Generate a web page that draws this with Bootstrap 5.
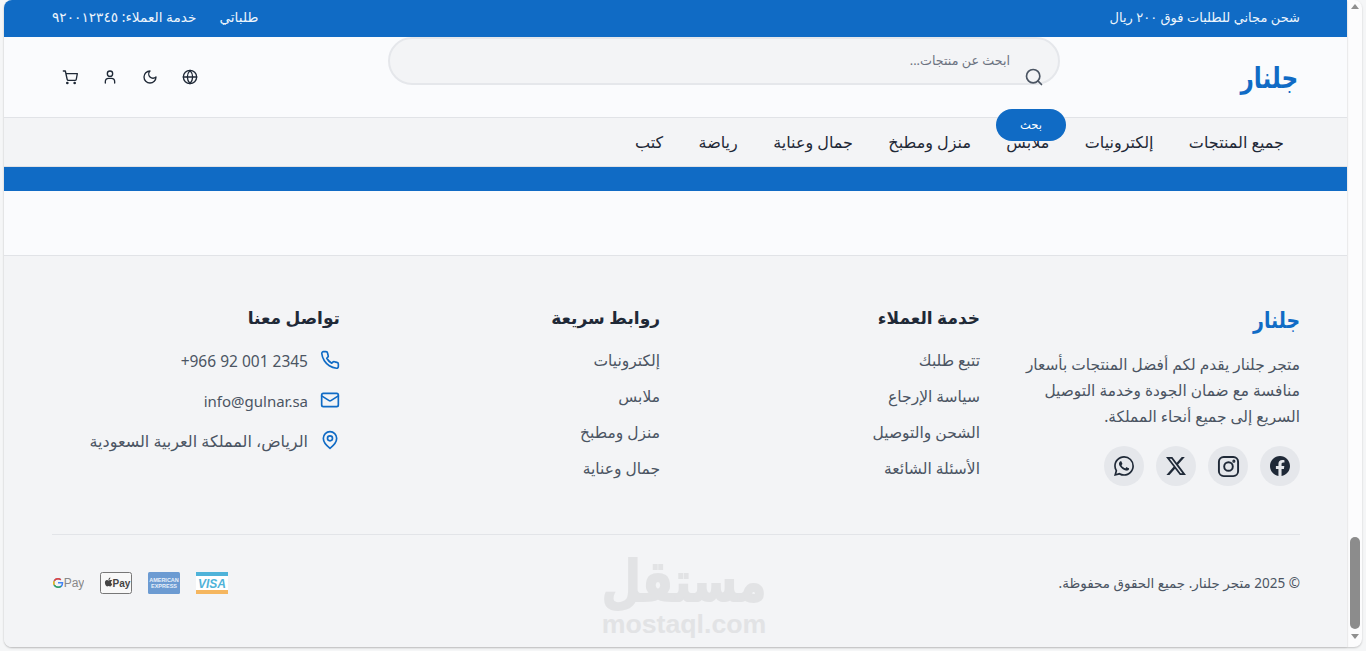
<!DOCTYPE html>
<html lang="ar" dir="rtl">
<head>
<meta charset="utf-8">
<title>جلنار</title>
<link href="https://cdn.jsdelivr.net/npm/bootstrap@5.3.0/dist/css/bootstrap.min.css" rel="stylesheet">
<style>
html,body{height:651px;overflow:hidden;background:#f5f6f7;}
body{font-family:"Noto Sans","DejaVu Sans",sans-serif;color:#1f2937;}
.shell{height:651px;direction:ltr;}
.gutter-l{width:4px;}
.pagebox{width:1343px;height:647px;direction:rtl;border-radius:8px 0 0 8px;overflow:hidden;position:relative;background:#fafbfd;box-shadow:0 1px 2px rgba(0,0,0,.25);}
.sbar{width:15px;height:647px;background:#fcfcfd;border-radius:0 8px 8px 0;box-shadow:0 1px 2px rgba(0,0,0,.2);}
.sbar-up{width:0;height:0;border:4px solid transparent;border-top:0;border-bottom:5px solid #8f8f8f;}
.sbar-dn{width:0;height:0;border:4px solid transparent;border-bottom:0;border-top:5px solid #8f8f8f;}
.sbar-thumb{width:10px;height:92px;background:#8c8c8c;border-radius:5px;margin-top:528px;margin-bottom:5px;}
.wrap{padding:0 47px 0 48px;}
.topstrip{height:37px;background:#106bc5;color:#eef5fc;font-size:13px;padding-bottom:2px;}
.top-left{gap:23px;font-size:13.7px;}
.headstrip{height:81px;border-bottom:1px solid #e1e3e7;}
.logo-big{font-size:29px;font-weight:700;color:#106bc5;line-height:1;padding-bottom:2px;transform:scaleX(.8);transform-origin:right center;margin-right:2px;}
.head-icons{margin-left:-2px;}
.searchbox{position:absolute;top:37px;left:384px;width:672px;height:48px;border:2px solid #e5e7eb;border-radius:24px;background:#f3f4f6;font-size:12.7px;color:#6b7280;padding:12px 48px 0 0;}
.search-ico{position:absolute;right:14px;top:28px;}
.search-btn{position:absolute;top:109px;left:992px;width:70px;height:32px;border:0;border-radius:16px;background:#106bc5;color:#fff;font-size:11.5px;z-index:3;}
.ico-btn{width:40px;height:40px;}
.navstrip{height:49px;background:#f3f4f6;border-bottom:1px solid #dfe1e5;font-size:16px;gap:35.4px;padding-right:63px;}
.navstrip a{color:#1f2937;text-decoration:none;}
.bluestrip{height:24px;background:#106bc5;}
.blankstrip{height:65px;border-bottom:1px solid #e1e3e7;}
.footbox{height:391px;background:#f3f4f6;padding-top:48px;}
.footgrid{display:grid;grid-template-columns:repeat(4,288px);gap:32px;height:230px;}
.foot-logo{font-size:23px;font-weight:700;color:#106bc5;line-height:30px;margin-bottom:18px;transform:scaleX(.82);transform-origin:right center;}
.foot-about{font-size:15.4px;line-height:26px;color:#4b5563;margin-bottom:16px;}
.social-row{gap:12px;}
.social{width:40px;height:40px;border-radius:50%;background:#e5e7eb;}
.foot-h{font-size:17px;font-weight:700;line-height:28px;color:#1f2937;margin-bottom:16px;}
.foot-links{font-size:15.5px;color:#4b5563;padding-top:1px!important;}
.foot-links li{height:36px;line-height:22px;}
.contact-list{padding-top:2px;}
.contact-row{height:40px;gap:12px;font-size:15.5px;color:#4b5563;}
.contact-row span{line-height:23px;}
.mail-text{font-size:15px;}
.place-text{font-size:16px;}
.copyrow{border-top:1px solid #e2e4e8;height:97px;font-size:13.5px;color:#4b5563;}
.pay{gap:16px;}
.wmark{position:absolute;left:592px;top:557px;width:176px;text-align:center;color:#e2e3e5;font-weight:700;}
.wmark-ar{font-size:45px;line-height:46px;height:46px;-webkit-text-stroke:1.5px #e2e3e5;transform:scaleY(1.25);}
.wmark-en{font-size:26.7px;line-height:26px;margin-top:8px;font-family:"Liberation Sans",sans-serif;direction:ltr;}
</style>
</head>
<body class="m-0">
<div class="shell d-flex align-items-start">
  <div class="gutter-l align-self-stretch"></div>
  <div class="pagebox">
    <div class="topstrip wrap d-flex justify-content-between align-items-center">
      <span>شحن مجاني للطلبات فوق ٢٠٠ ريال</span>
      <div class="top-left d-flex"><span>طلباتي</span><span>خدمة العملاء: ٩٢٠٠١٢٣٤٥</span></div>
    </div>
    <div class="headstrip wrap d-flex justify-content-between align-items-center">
      <div class="logo-big">جلنار</div>
      <div class="head-icons d-flex">
        <div class="ico-btn d-flex align-items-center justify-content-center"><svg width="16" height="16" viewBox="0 0 24 24" fill="none" stroke="#1f2937" stroke-width="2" stroke-linecap="round" stroke-linejoin="round"><circle cx="12" cy="12" r="10"/><path d="M2 12h20"/><path d="M12 2a15.3 15.3 0 0 1 4 10 15.3 15.3 0 0 1-4 10 15.3 15.3 0 0 1-4-10 15.3 15.3 0 0 1 4-10z"/></svg></div>
        <div class="ico-btn d-flex align-items-center justify-content-center"><svg width="16" height="16" viewBox="0 0 24 24" fill="none" stroke="#1f2937" stroke-width="2" stroke-linecap="round" stroke-linejoin="round"><path d="M12 3a6 6 0 0 0 9 9 9 9 0 1 1-9-9z"/></svg></div>
        <div class="ico-btn d-flex align-items-center justify-content-center"><svg width="16" height="16" viewBox="0 0 24 24" fill="none" stroke="#1f2937" stroke-width="2" stroke-linecap="round" stroke-linejoin="round"><circle cx="12" cy="7" r="4"/><path d="M5 21v-2a5 5 0 0 1 5-5h4a5 5 0 0 1 5 5v2"/></svg></div>
        <div class="ico-btn d-flex align-items-center justify-content-center"><svg width="16" height="16" viewBox="0 0 24 24" fill="none" stroke="#1f2937" stroke-width="2" stroke-linecap="round" stroke-linejoin="round"><circle cx="8" cy="21" r="1"/><circle cx="19" cy="21" r="1"/><path d="M2 3h3l2.7 12.4a2 2 0 0 0 2 1.600h9.700a2 2 0 0 0 2-1.600L23 7H6"/></svg></div>
      </div>
    </div>
    <div class="searchbox">ابحث عن منتجات...
      <svg class="search-ico" width="20" height="20" viewBox="0 0 24 24" fill="none" stroke="#4b5563" stroke-width="2" stroke-linecap="round"><circle cx="11" cy="11" r="8"/><path d="m21 21-4.3-4.3"/></svg>
    </div>
    <button class="search-btn" type="button">بحث</button>
    <nav class="navstrip d-flex align-items-center">
      <a href="#">جميع المنتجات</a><a href="#">إلكترونيات</a><a href="#">ملابس</a><a href="#">منزل ومطبخ</a><a href="#">جمال وعناية</a><a href="#">رياضة</a><a href="#">كتب</a>
    </nav>
    <div class="bluestrip"></div>
    <div class="blankstrip"></div>
    <footer class="footbox wrap">
      <div class="footgrid">
        <div>
          <div class="foot-logo">جلنار</div>
          <p class="foot-about">متجر جلنار يقدم لكم أفضل المنتجات بأسعار منافسة مع ضمان الجودة وخدمة التوصيل السريع إلى جميع أنحاء المملكة.</p>
          <div class="social-row d-flex">
            <div class="social d-flex align-items-center justify-content-center"><svg width="20" height="20" viewBox="0 0 24 24" fill="#1f2937"><path d="M24 12.07C24 5.4 18.63 0 12 0S0 5.4 0 12.07C0 18.1 4.39 23.1 10.13 24v-8.44H7.08v-3.49h3.05V9.41c0-3.02 1.79-4.69 4.53-4.69 1.31 0 2.68.24 2.68.24v2.97h-1.51c-1.49 0-1.96.93-1.96 1.89v2.25h3.33l-.53 3.49h-2.8V24C19.61 23.1 24 18.1 24 12.07z"/></svg></div>
            <div class="social d-flex align-items-center justify-content-center"><svg width="23" height="23" viewBox="0 0 24 24" fill="none" stroke="#1f2937" stroke-width="2"><rect x="2" y="2" width="20" height="20" rx="5"/><circle cx="12" cy="12" r="4.5"/><circle cx="17.6" cy="6.4" r=".6" fill="#1f2937"/></svg></div>
            <div class="social d-flex align-items-center justify-content-center"><svg width="20" height="20" viewBox="0 0 24 24" fill="#1f2937"><path d="M18.9 1.15h3.68l-8.04 9.19L24 22.85h-7.41l-5.8-7.58-6.64 7.58H.47l8.6-9.83L0 1.15h7.59l5.24 6.93zM17.61 20.64h2.04L6.49 3.24H4.3z"/></svg></div>
            <div class="social d-flex align-items-center justify-content-center"><svg width="20" height="20" viewBox="0 0 24 24" fill="#1f2937"><path d="M17.47 14.38c-.3-.15-1.76-.87-2.03-.97-.27-.1-.47-.15-.67.15-.2.3-.77.97-.94 1.16-.17.2-.35.22-.65.08-.3-.15-1.26-.46-2.4-1.48-.89-.79-1.49-1.77-1.66-2.07-.17-.3-.02-.46.13-.61.13-.13.3-.35.45-.52.15-.17.2-.3.3-.5.1-.2.05-.37-.03-.52-.07-.15-.67-1.61-.92-2.2-.24-.58-.49-.5-.67-.51h-.57c-.2 0-.52.07-.79.37-.27.3-1.04 1.02-1.04 2.48s1.07 2.88 1.21 3.07c.15.2 2.1 3.2 5.08 4.49.71.3 1.26.49 1.7.62.71.23 1.36.2 1.87.12.57-.09 1.76-.72 2.01-1.41.25-.7.25-1.29.17-1.41-.07-.13-.27-.2-.57-.35M12.05 21.78h0a9.87 9.87 0 0 1-5.03-1.38l-.36-.21-3.74.98 1-3.65-.24-.37a9.86 9.86 0 0 1-1.51-5.26c0-5.45 4.44-9.88 9.89-9.88a9.82 9.82 0 0 1 6.99 2.9 9.83 9.83 0 0 1 2.89 6.99c0 5.45-4.44 9.88-9.89 9.88M20.46 3.49A11.82 11.82 0 0 0 12.05 0C5.5 0 .16 5.34.16 11.89c0 2.1.55 4.14 1.59 5.95L.06 24l6.3-1.65a11.88 11.88 0 0 0 5.68 1.45h.01c6.55 0 11.89-5.34 11.89-11.89a11.82 11.82 0 0 0-3.48-8.41z"/></svg></div>
          </div>
        </div>
        <div>
          <div class="foot-h">خدمة العملاء</div>
          <ul class="foot-links list-unstyled m-0 p-0"><li>تتبع طلبك</li><li>سياسة الإرجاع</li><li>الشحن والتوصيل</li><li>الأسئلة الشائعة</li></ul>
        </div>
        <div>
          <div class="foot-h">روابط سريعة</div>
          <ul class="foot-links list-unstyled m-0 p-0"><li>إلكترونيات</li><li>ملابس</li><li>منزل ومطبخ</li><li>جمال وعناية</li></ul>
        </div>
        <div>
          <div class="foot-h">تواصل معنا</div>
          <div class="contact-list">
          <div class="contact-row d-flex"><svg width="20" height="20" viewBox="0 0 24 24" fill="none" stroke="#106bc5" stroke-width="2" stroke-linecap="round" stroke-linejoin="round"><path d="M22 16.92v3a2 2 0 0 1-2.18 2 19.79 19.79 0 0 1-8.63-3.07 19.5 19.5 0 0 1-6-6 19.79 19.79 0 0 1-3.07-8.67A2 2 0 0 1 4.11 2h3a2 2 0 0 1 2 1.72c.13.96.36 1.9.7 2.81a2 2 0 0 1-.45 2.11L8.09 9.91a16 16 0 0 0 6 6l1.27-1.27a2 2 0 0 1 2.11-.45c.91.34 1.85.57 2.81.7A2 2 0 0 1 22 16.92z"/></svg><span dir="ltr">+966 92 001 2345</span></div>
          <div class="contact-row d-flex"><svg width="20" height="20" viewBox="0 0 24 24" fill="none" stroke="#106bc5" stroke-width="2" stroke-linecap="round" stroke-linejoin="round"><rect x="2" y="4" width="20" height="16" rx="2"/><path d="m22 7-8.97 5.7a1.94 1.94 0 0 1-2.06 0L2 7"/></svg><span class="mail-text" dir="ltr">info@gulnar.sa</span></div>
          <div class="contact-row d-flex"><svg width="20" height="20" viewBox="0 0 24 24" fill="none" stroke="#106bc5" stroke-width="2" stroke-linecap="round" stroke-linejoin="round"><path d="M20 10c0 6-8 12-8 12s-8-6-8-12a8 8 0 0 1 16 0z"/><circle cx="12" cy="10" r="3"/></svg><span class="place-text">الرياض، المملكة العربية السعودية</span></div>
          </div>
        </div>
      </div>
      <div class="copyrow d-flex justify-content-between align-items-center">
        <span>© 2025 متجر جلنار. جميع الحقوق محفوظة.</span>
        <div class="pay d-flex align-items-center">
          <svg width="32" height="22" viewBox="0 0 32 22"><rect width="32" height="22" rx="1.5" fill="#fff"/><rect width="32" height="4" fill="#4fb3d9"/><rect width="32" height="4" y="18" fill="#f5b65f"/><text x="16" y="16" text-anchor="middle" font-family="Liberation Sans" font-weight="700" font-style="italic" font-size="12" fill="#4fb3d9">VISA</text></svg>
          <svg width="32" height="22" viewBox="0 0 32 22"><rect width="32" height="22" rx="1.5" fill="#6c9bd2"/><text x="16" y="10" text-anchor="middle" font-family="Liberation Sans" font-weight="700" font-size="5.5" fill="#e8f0fa">AMERICAN</text><text x="16" y="16" text-anchor="middle" font-family="Liberation Sans" font-weight="700" font-size="5.5" fill="#e8f0fa">EXPRESS</text></svg>
          <svg width="32" height="22" viewBox="0 0 32 22"><rect x=".5" y=".5" width="31" height="21" rx="2" fill="#f8f8f8" stroke="#777"/><path d="M9.8 7.2c.4-.5.6-1 .6-1.600-.6 0-1.100.3-1.500.8-.3.400-.6 1-.5 1.500.6 0 1.100-.3 1.400-.7zM10.300 8c-.8 0-1.200.5-1.700.5s-1-.5-1.700-.5c-1 0-2 .9-2 2.600 0 1.900 1.300 3.900 2.200 3.900.5 0 .8-.4 1.500-.4s.9.400 1.500.4c1 0 1.900-1.700 2.100-2.500-1.700-.7-1.600-3 .1-3.500-.5-.6-1.300-.5-2-.5z" fill="#444"/><text x="21.500" y="15" text-anchor="middle" font-family="Liberation Sans" font-weight="700" font-size="10" fill="#444">Pay</text></svg>
          <svg width="32" height="22" viewBox="0 0 32 22"><path d="M6 10.800h4.500c0 2.700-1.700 4.500-4.500 4.500a4.300 4.300 0 0 1 0-8.600c1.200 0 2.100.4 2.800 1" fill="none" stroke="#4285f4" stroke-width="1.500"/><path d="M2.300 8.700A4.300 4.300 0 0 1 6 6.700c1.200 0 2.100.4 2.800 1" fill="none" stroke="#ea4335" stroke-width="1.500"/><path d="M2.200 13a4.300 4.300 0 0 1 0-4" fill="none" stroke="#fbbc05" stroke-width="1.500"/><path d="M2.300 13.200A4.300 4.300 0 0 0 6 15.300c1.200 0 2.100-.4 2.900-1.100" fill="none" stroke="#34a853" stroke-width="1.500"/><text x="22" y="15" text-anchor="middle" font-family="Liberation Sans" font-size="12" fill="#888">Pay</text></svg>
        </div>
      </div>
    </footer>
    <div class="wmark"><div class="wmark-ar">مستقل</div><div class="wmark-en">mostaql.com</div></div>
  </div>
  <div class="sbar d-flex flex-column align-items-center pt-1">
    <div class="sbar-up"></div>
    <div class="sbar-thumb"></div>
    <div class="sbar-dn"></div>
  </div>
</div>
<script src="https://cdn.jsdelivr.net/npm/bootstrap@5.3.0/dist/js/bootstrap.bundle.min.js"></script>
</body>
</html>
